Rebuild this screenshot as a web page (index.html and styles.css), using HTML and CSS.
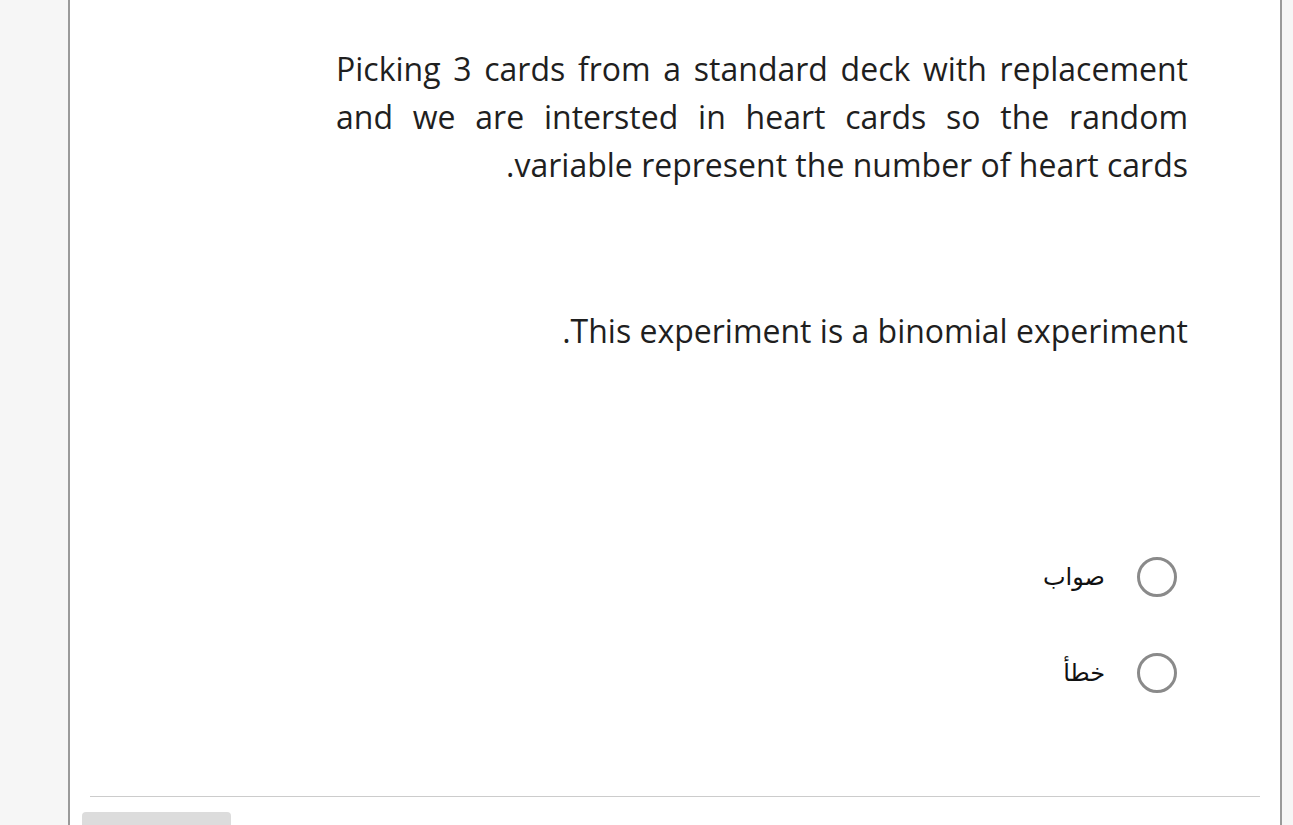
FILE: index.html
```html
<!DOCTYPE html>
<html lang="en">
<head>
<meta charset="utf-8">
<link rel="stylesheet" href="styles.css">
</head>
<body>
<div class="page">
  <div class="gutter"></div>
  <main class="card">
    <div class="question">
      <p class="q-text">Picking 3 cards from a standard deck with replacement and we are intersted in heart cards so the random variable represent the number of heart cards.</p>
      <p class="q-text statement">This experiment is a binomial experiment.</p>
    </div>
    <div class="answers">
      <label class="option"><span class="radio"></span><span class="opt-label">صواب</span></label>
      <label class="option"><span class="radio"></span><span class="opt-label">خطأ</span></label>
    </div>
    <hr class="sep">
    <div class="btn"></div>
  </main>
  <div class="gutter-right"></div>
</div>
</body>
</html>
```

FILE: styles.css
```css
html, body {
  margin: 0;
  padding: 0;
  height: 100%;
  overflow: hidden;
  background: #f6f6f6;
}
.page {
  display: flex;
  height: 825px;
}
.gutter {
  width: 68px;
  flex: none;
}
.gutter-right {
  flex: 1;
}
.card {
  width: 1210px;
  flex: none;
  background: #fff;
  border-left: 2px solid #9a9a9a;
  border-right: 2px solid #9a9a9a;
  display: flex;
  flex-direction: column;
}
.question {
  padding: 45px 92px 0 266px;
  direction: rtl;
}
.q-text {
  margin: 0;
  font-family: "Open Sans", sans-serif;
  font-size: 32px;
  line-height: 48px;
  color: #1f1f1f;
  text-align: justify;
}
.statement {
  margin-top: 118px;
}
.answers {
  direction: rtl;
  margin-top: 202px;
  padding-right: 103px;
  display: flex;
  flex-direction: column;
  gap: 56px;
}
.option {
  display: flex;
  align-items: center;
  gap: 32px;
  height: 40px;
}
.radio {
  width: 34px;
  height: 34px;
  border: 3px solid #8a8a8a;
  border-radius: 50%;
  flex: none;
}
.opt-label {
  font-family: "DejaVu Sans", sans-serif;
  font-size: 24px;
  color: #111;
}
.sep {
  margin: 103px 20px 0 20px;
  border: none;
  height: 2px;
  background: #cccccc;
}
.btn {
  margin: 15px 0 0 12px;
  width: 149px;
  height: 20px;
  background: #dcdcdc;
  border-radius: 4px 4px 0 0;
}
```
